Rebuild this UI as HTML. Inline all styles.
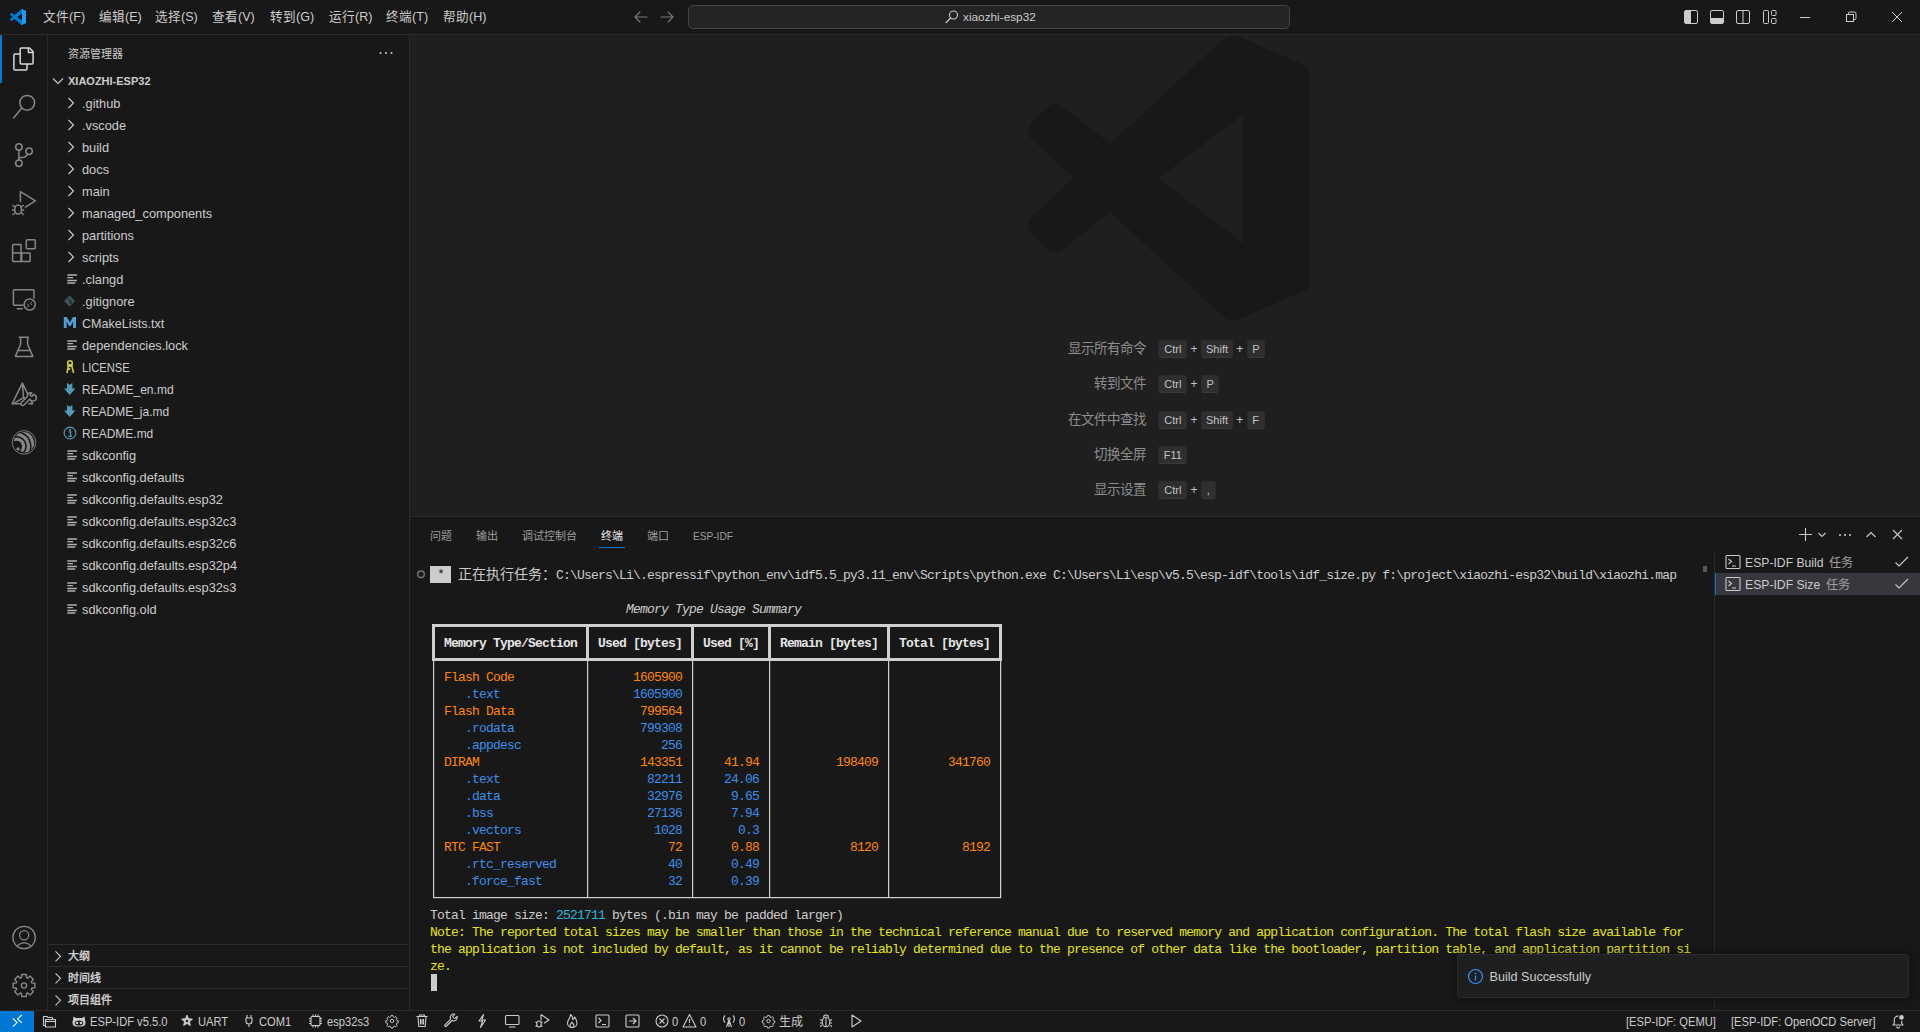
<!DOCTYPE html>
<html lang="zh-CN">
<head>
<meta charset="utf-8">
<style>
*{box-sizing:border-box;margin:0;padding:0}
html,body{width:1920px;height:1032px;overflow:hidden;background:#181818;font-family:"Liberation Sans",sans-serif;color:#cccccc}
.a{position:absolute}
svg{display:block;overflow:visible}
.t{position:absolute;white-space:nowrap;line-height:1}
/* regions */
#title{left:0;top:0;width:1920px;height:35px;background:#181818;border-bottom:1px solid #2b2b2b}
#act{left:0;top:35px;width:48px;height:975px;background:#181818;border-right:1px solid #2b2b2b}
#side{left:48px;top:35px;width:362px;height:975px;background:#181818;border-right:1px solid #2b2b2b}
#editor{left:410px;top:35px;width:1510px;height:481px;background:#1f1f1f}
#panel{left:410px;top:516px;width:1510px;height:494px;background:#181818;border-top:1px solid #2b2b2b}
#status{left:0;top:1010px;width:1920px;height:22px;background:#181818;border-top:1px solid #2b2b2b}
.menu{top:11px;font-size:12.6px;color:#cccccc}
.tree{font-size:12.8px;color:#cccccc;height:22px;line-height:22px}
.mono{font-family:"Liberation Mono",monospace}
</style>
</head>
<body>
<div id="title" class="a"></div>
<div id="act" class="a"></div>
<div id="side" class="a"></div>
<div id="editor" class="a"></div>
<div id="panel" class="a"></div>
<div id="status" class="a"></div>

<!-- TITLEBAR -->
<svg class="a" style="left:10px;top:9px" width="16" height="16" viewBox="0 0 100 100"><defs><clipPath id="lg"><path d="M96.5 10.8 75.9.9a6.2 6.2 0 0 0-7.1 1.2L29.4 38 12.2 25a4.2 4.2 0 0 0-5.3.2L1.4 30.3a4.2 4.2 0 0 0 0 6.2L16.3 50 1.4 63.5a4.2 4.2 0 0 0 0 6.2l5.5 5a4.2 4.2 0 0 0 5.3.2l17.2-13L68.8 97.9a6.2 6.2 0 0 0 7.1 1.2l20.6-9.9a6.2 6.2 0 0 0 3.5-5.6V16.4a6.2 6.2 0 0 0-3.5-5.6zM75 72.7 45.1 50 75 27.3z"/></clipPath></defs><g clip-path="url(#lg)"><rect x="0" y="0" width="100" height="100" fill="#0065a9"/><path d="M0 30L30 38L75 0H100V100H75L30 62L0 70Z" fill="#007acc"/><rect x="74" y="0" width="26" height="100" fill="#1f9cf0"/></g></svg>
<div class="t menu" style="left:43px">文件(F)</div>
<div class="t menu" style="left:99px">编辑(E)</div>
<div class="t menu" style="left:155px">选择(S)</div>
<div class="t menu" style="left:212px">查看(V)</div>
<div class="t menu" style="left:270px">转到(G)</div>
<div class="t menu" style="left:329px">运行(R)</div>
<div class="t menu" style="left:386px">终端(T)</div>
<div class="t menu" style="left:443px">帮助(H)</div>

<!-- title center -->
<svg class="a" style="left:0;top:0" width="1920" height="35">
 <g fill="none" stroke="#cccccc" stroke-width="1.1" stroke-linecap="round" stroke-linejoin="round" opacity="0.55">
  <path d="M647 17H635M640 12l-5 5 5 5"/>
  <path d="M661 17H673M668 12l5 5-5 5"/>
 </g>
 <rect x="688.5" y="5.5" width="601" height="23" rx="4.5" fill="#242424" stroke="#454545"/>
 <g fill="none" stroke="#cccccc" stroke-width="1.1">
  <circle cx="953.5" cy="15" r="4"/><path d="M950.6 18l-5 5"/>
 </g>
 <g fill="none" stroke="#cccccc" stroke-width="1">
  <rect x="1684.5" y="10.5" width="13" height="13" rx="1.5"/>
  <rect x="1710.5" y="10.5" width="13" height="13" rx="1.5"/>
  <rect x="1736.5" y="10.5" width="13" height="13" rx="1.5"/><path d="M1743 10.5v13"/>
  <rect x="1763.5" y="10.5" width="5" height="13" rx="1"/><rect x="1771.5" y="10.5" width="4.5" height="5" rx="1"/><rect x="1771.5" y="18.5" width="4.5" height="5" rx="1"/>
 </g>
 <rect x="1685" y="11" width="6" height="12" fill="#cccccc"/>
 <rect x="1711" y="18" width="12" height="5" fill="#cccccc"/>
 <g fill="none" stroke="#cccccc" stroke-width="1">
  <path d="M1800 17.5h10"/>
  <rect x="1846.5" y="14.5" width="7" height="7"/><path d="M1848.5 14.5v-1.5a1 1 0 0 1 1-1h5a1.5 1.5 0 0 1 1.5 1.5v5a1 1 0 0 1-1 1h-1.5"/>
  <path d="M1892 12l10 10M1902 12l-10 10"/>
 </g>
</svg>
<div class="t" style="left:963px;top:12px;font-size:11.8px;color:#cccccc">xiaozhi-esp32</div>

<!-- ACTIVITY BAR -->
<div class="a" style="left:0;top:35px;width:2px;height:48px;background:#0078d4"></div>
<svg class="a" style="left:0;top:0" width="48" height="1010">
 <g fill="none" stroke="#d7d7d7" stroke-width="1.5" stroke-linejoin="round">
  <path d="M20.2 54V49a1 1 0 0 1 1-1h8.3l3.6 3.6V63a1 1 0 0 1-1 1H21.2a1 1 0 0 1-1-1Z"/>
  <path d="M28.4 48v4.5h4.6"/>
  <path d="M20.2 54H14.9a1 1 0 0 0-1 1v14a1 1 0 0 0 1 1H26a1 1 0 0 0 1-1v-5"/>
 </g>
 <g fill="none" stroke="#868686" stroke-width="1.5" stroke-linecap="round" stroke-linejoin="round">
  <circle cx="27.2" cy="102.8" r="7.4"/><path d="M21.8 108l-8.2 10"/>
  <circle cx="18.9" cy="147" r="3.2"/><circle cx="18.9" cy="163.3" r="3.2"/><circle cx="29.1" cy="151.2" r="3.2"/>
  <path d="M18.9 150.2v9.9M27.5 154c-1 2.5-2.5 3.6-5.5 3.6h-3"/>
  <path d="M20.4 201.5V191.6l15 9.3-10 6.3"/>
  <ellipse cx="18.1" cy="209.5" rx="3.4" ry="4.6"/><path d="M13 205.5l2 1.5M23.2 205.5l-2 1.5M12.5 210h2.2M21.5 210h2.2M13 214.5l2-1.5M23.2 214.5l-2-1.5"/>
  <path d="M13.4 244.5h7.6v17H13.4a.8.8 0 0 1-.8-.8V245.3a.8.8 0 0 1 .8-.8Z"/><path d="M12.6 253h17.5v7.7a.8.8 0 0 1-.8.8H21M21.7 253v8.5"/>
  <rect x="26.3" y="239.8" width="9" height="9" rx="1"/>
 </g>
 <g fill="none" stroke="#868686" stroke-width="1.5" stroke-linecap="round" stroke-linejoin="round">
  <path d="M23 305.3H14.2a.8.8 0 0 1-.8-.8V290.6a.8.8 0 0 1 .8-.8h19a.8.8 0 0 1 .8.8V298"/><path d="M17.3 308.7h5"/>
  <circle cx="29.7" cy="304.5" r="5.6"/><path d="M27.3 304l1.6 1.6-1.6 1.6M32 301.7l-1.6 1.6 1.6 1.6" stroke-width="1"/>
  <path d="M19.2 337.2h9.3M20.6 337.2v7L15.4 356.4h17.4l-5.2-12.2v-7M17.5 350.6h13"/>
  <path d="M22.4 383.2L12.1 403.8h11M29 403.8h3.7L22.4 383.2l1.2 14.5-8.5 5"/><path d="M23.6 397.7l4.5 2"/>
  <path d="M24 405l6-6a3.3 3.3 0 1 0 3.5-4.5l-1.5 1.8-1.4-.4-.4-1.4 1.6-1.6a3.3 3.3 0 0 0-4.4 3.6l-6 6a1.2 1.2 0 1 0 2.6 2.5Z" fill="#181818"/>
 </g>
 <defs><clipPath id="espc"><circle cx="24" cy="442.4" r="10.4"/></clipPath></defs>
 <g>
  <circle cx="24" cy="442.4" r="11.8" fill="none" stroke="#868686" stroke-width="0.9"/>
  <g clip-path="url(#espc)" fill="none" stroke="#868686" stroke-width="3.2"><path d="M9.20 446.30A7.2 7.2 0 1 1 21.49 451.39"/><path d="M4.40 446.30A12 12 0 1 1 24.89 454.79"/><path d="M-0.30 446.30A16.7 16.7 0 1 1 28.21 458.11"/></g>
  <circle cx="18.1" cy="448.9" r="1.7" fill="#868686"/>
 </g>
 <g fill="none" stroke="#868686" stroke-width="1.3">
  <circle cx="24.1" cy="937.5" r="11.2"/><circle cx="24.1" cy="935.3" r="4.6"/>
  <path d="M17.3 946.3a8.5 8.5 0 0 1 13.6 0"/>
 </g>
 <path fill="none" stroke="#868686" stroke-width="1.4" stroke-linejoin="round" d="M21.46 977.70 L21.67 974.55 L26.33 974.55 L26.54 977.70 L27.72 978.19 L30.09 976.10 L33.40 979.41 L31.31 981.78 L31.80 982.96 L34.95 983.17 L34.95 987.83 L31.80 988.04 L31.31 989.22 L33.40 991.59 L30.09 994.90 L27.72 992.81 L26.54 993.30 L26.33 996.45 L21.67 996.45 L21.46 993.30 L20.28 992.81 L17.91 994.90 L14.60 991.59 L16.69 989.22 L16.20 988.04 L13.05 987.83 L13.05 983.17 L16.20 982.96 L16.69 981.78 L14.60 979.41 L17.91 976.10 L20.28 978.19Z"/>
 <circle cx="24" cy="985.5" r="2.6" fill="none" stroke="#868686" stroke-width="1.4"/>
</svg>

<!-- SIDEBAR -->
<div class="t" style="left:68px;top:48.5px;font-size:11px;color:#cccccc">资源管理器</div>
<svg class="a" style="left:0;top:0" width="410" height="1010">
 <g fill="#cccccc"><circle cx="380.5" cy="53" r="1"/><circle cx="386" cy="53" r="1"/><circle cx="391.5" cy="53" r="1"/></g>
 <path d="M53 78.5l5 5 5-5" fill="none" stroke="#cccccc" stroke-width="1.1"/>
 <path d="M68.5 98l5 5-5 5" fill="none" stroke="#cccccc" stroke-width="1.1"/>
 <path d="M68.5 120l5 5-5 5" fill="none" stroke="#cccccc" stroke-width="1.1"/>
 <path d="M68.5 142l5 5-5 5" fill="none" stroke="#cccccc" stroke-width="1.1"/>
 <path d="M68.5 164l5 5-5 5" fill="none" stroke="#cccccc" stroke-width="1.1"/>
 <path d="M68.5 186l5 5-5 5" fill="none" stroke="#cccccc" stroke-width="1.1"/>
 <path d="M68.5 208l5 5-5 5" fill="none" stroke="#cccccc" stroke-width="1.1"/>
 <path d="M68.5 230l5 5-5 5" fill="none" stroke="#cccccc" stroke-width="1.1"/>
 <path d="M68.5 252l5 5-5 5" fill="none" stroke="#cccccc" stroke-width="1.1"/>
 <path d="M67.3 275h9.6M67.3 277.6h5.7M67.3 280.5h9.6M67.3 283h8" stroke="#cccccc" stroke-width="1.3" opacity="0.85"/>
 <path d="M69.6 295.5l5.5 5.5-5.5 5.5-5.5-5.5Z" fill="#41535b"/><path d="M68 298l1.8 1.8v4M69.8 299.8l1.6 1.6v2.6" stroke="#181818" stroke-width="0.8" fill="none"/>
 <path d="M63.8 328V317h3l3.1 5.5 3.1-5.5h3V328h-2.9v-6.2l-2.4 4.2h-1.6l-2.4-4.2V328Z" fill="#4f9fd0"/>
 <path d="M67.3 341h9.6M67.3 343.6h5.7M67.3 346.5h9.6M67.3 349h8" stroke="#cccccc" stroke-width="1.3" opacity="0.85"/>
 <g fill="none" stroke="#cbcb41" stroke-width="1.6"><circle cx="70" cy="363" r="2.3"/><path d="M68.5 365L67 373M71.5 365l2.2 8M69.3 368v2"/></g><rect x="67.5" y="364" width="5" height="3" fill="#cbcb41"/>
 <path d="M67 383l2.7 1.8 2.7-1.8v5.5h3L69.7 395l-5.6-6.5h2.9Z" fill="#519aba"/>
 <path d="M67 405l2.7 1.8 2.7-1.8v5.5h3L69.7 417l-5.6-6.5h2.9Z" fill="#519aba"/>
 <circle cx="70" cy="433" r="5.9" fill="none" stroke="#519aba" stroke-width="1.1"/><circle cx="70" cy="429.8" r="1" fill="#519aba"/><path d="M68.6 431.8h2v4.3M68.3 436.3h3.6" stroke="#519aba" stroke-width="1.3" fill="none"/>
 <path d="M67.3 451h9.6M67.3 453.6h5.7M67.3 456.5h9.6M67.3 459h8" stroke="#cccccc" stroke-width="1.3" opacity="0.85"/>
 <path d="M67.3 473h9.6M67.3 475.6h5.7M67.3 478.5h9.6M67.3 481h8" stroke="#cccccc" stroke-width="1.3" opacity="0.85"/>
 <path d="M67.3 495h9.6M67.3 497.6h5.7M67.3 500.5h9.6M67.3 503h8" stroke="#cccccc" stroke-width="1.3" opacity="0.85"/>
 <path d="M67.3 517h9.6M67.3 519.6h5.7M67.3 522.5h9.6M67.3 525h8" stroke="#cccccc" stroke-width="1.3" opacity="0.85"/>
 <path d="M67.3 539h9.6M67.3 541.6h5.7M67.3 544.5h9.6M67.3 547h8" stroke="#cccccc" stroke-width="1.3" opacity="0.85"/>
 <path d="M67.3 561h9.6M67.3 563.6h5.7M67.3 566.5h9.6M67.3 569h8" stroke="#cccccc" stroke-width="1.3" opacity="0.85"/>
 <path d="M67.3 583h9.6M67.3 585.6h5.7M67.3 588.5h9.6M67.3 591h8" stroke="#cccccc" stroke-width="1.3" opacity="0.85"/>
 <path d="M67.3 605h9.6M67.3 607.6h5.7M67.3 610.5h9.6M67.3 613h8" stroke="#cccccc" stroke-width="1.3" opacity="0.85"/>
 <path d="M48 944.5h361M48 966.5h361M48 988.5h361" stroke="#2b2b2b"/>
 <path d="M55.5 951.3l5 5-5 5M55.5 973.3l5 5-5 5M55.5 995.3l5 5-5 5" fill="none" stroke="#cccccc" stroke-width="1.1"/>
</svg>
<div class="t" style="left:68px;top:76px;font-size:11px;font-weight:bold;color:#cccccc">XIAOZHI-ESP32</div>
<div class="t tree" style="left:82px;top:93px">.github</div>
<div class="t tree" style="left:82px;top:115px">.vscode</div>
<div class="t tree" style="left:82px;top:137px">build</div>
<div class="t tree" style="left:82px;top:159px">docs</div>
<div class="t tree" style="left:82px;top:181px">main</div>
<div class="t tree" style="left:82px;top:203px">managed_components</div>
<div class="t tree" style="left:82px;top:225px">partitions</div>
<div class="t tree" style="left:82px;top:247px">scripts</div>
<div class="t tree" style="left:82px;top:269px">.clangd</div>
<div class="t tree" style="left:82px;top:291px">.gitignore</div>
<div class="t tree" style="left:82px;top:313px;transform:scaleX(0.98);transform-origin:0 0">CMakeLists.txt</div>
<div class="t tree" style="left:82px;top:335px">dependencies.lock</div>
<div class="t tree" style="left:82px;top:357px;transform:scaleX(0.87);transform-origin:0 0">LICENSE</div>
<div class="t tree" style="left:82px;top:379px;transform:scaleX(0.94);transform-origin:0 0">README_en.md</div>
<div class="t tree" style="left:82px;top:401px;transform:scaleX(0.935);transform-origin:0 0">README_ja.md</div>
<div class="t tree" style="left:82px;top:423px;transform:scaleX(0.937);transform-origin:0 0">README.md</div>
<div class="t tree" style="left:82px;top:445px">sdkconfig</div>
<div class="t tree" style="left:82px;top:467px">sdkconfig.defaults</div>
<div class="t tree" style="left:82px;top:489px">sdkconfig.defaults.esp32</div>
<div class="t tree" style="left:82px;top:511px">sdkconfig.defaults.esp32c3</div>
<div class="t tree" style="left:82px;top:533px">sdkconfig.defaults.esp32c6</div>
<div class="t tree" style="left:82px;top:555px">sdkconfig.defaults.esp32p4</div>
<div class="t tree" style="left:82px;top:577px">sdkconfig.defaults.esp32s3</div>
<div class="t tree" style="left:82px;top:599px">sdkconfig.old</div>
<div class="t" style="left:68px;top:951px;font-size:11px;font-weight:bold;color:#cccccc">大纲</div>
<div class="t" style="left:68px;top:973px;font-size:11px;font-weight:bold;color:#cccccc">时间线</div>
<div class="t" style="left:68px;top:995px;font-size:11px;font-weight:bold;color:#cccccc">项目组件</div>

<!-- EDITOR WATERMARK -->
<svg class="a" style="left:1028px;top:35px" width="281" height="286" viewBox="0 0 100 100" preserveAspectRatio="none">
 <path fill="#181818" fill-rule="evenodd" d="M70.9119 99.3171C72.4869 99.9307 74.2828 99.8914 75.8725 99.1264L100 88.6V11.4L75.8725 0.873756C73.7862 -0.130129 71.3446 0.11576 69.5135 1.44695C69.252 1.63711 69.0028 1.84943 68.769 2.08341L29.3551 38.0415L12.1872 25.0096C10.589 23.7965 8.35363 23.8959 6.86933 25.2461L1.36303 30.2549C-0.452552 31.9064 -0.454633 34.7627 1.35853 36.417L16.2471 50.0001L1.35853 63.5832C-0.454633 65.2374 -0.452552 68.0938 1.36303 69.7453L6.86933 74.7541C8.35363 76.1043 10.589 76.2037 12.1872 74.9905L29.3551 61.9587L68.769 97.9167C69.3925 98.5406 70.1246 99.0104 70.9119 99.3171ZM76.6 27.7L46.4 50.2L76.6 72.8Z"/>
</svg>
<style>
.sl{position:absolute;right:774px;white-space:nowrap;font-size:13.5px;line-height:1;color:#8e8e8e}
.kb{position:absolute;height:18px;background:#2f2f2f;border:1px solid #2c2c2c;border-bottom-color:#3a3a3a;border-radius:3px;font-size:11px;line-height:16px;text-align:center;color:#c3c3c3}
.kp{position:absolute;font-size:12px;line-height:1;color:#c3c3c3}
</style>
<div class="sl" style="top:342px">显示所有命令</div>
<div class="kb" style="left:1158.4px;top:340px;width:29px">Ctrl</div>
<div class="kp" style="left:1190.4px;top:343px">+</div>
<div class="kb" style="left:1200.8000000000002px;top:340px;width:32.5px">Shift</div>
<div class="kp" style="left:1236.3000000000002px;top:343px">+</div>
<div class="kb" style="left:1246.7000000000003px;top:340px;width:18.5px">P</div>
<div class="sl" style="top:377px">转到文件</div>
<div class="kb" style="left:1158.4px;top:375px;width:29px">Ctrl</div>
<div class="kp" style="left:1190.4px;top:378px">+</div>
<div class="kb" style="left:1200.8000000000002px;top:375px;width:18.5px">P</div>
<div class="sl" style="top:413px">在文件中查找</div>
<div class="kb" style="left:1158.4px;top:411px;width:29px">Ctrl</div>
<div class="kp" style="left:1190.4px;top:414px">+</div>
<div class="kb" style="left:1200.8000000000002px;top:411px;width:32.5px">Shift</div>
<div class="kp" style="left:1236.3000000000002px;top:414px">+</div>
<div class="kb" style="left:1246.7000000000003px;top:411px;width:18px">F</div>
<div class="sl" style="top:448px">切换全屏</div>
<div class="kb" style="left:1158.4px;top:446px;width:29px">F11</div>
<div class="sl" style="top:483px">显示设置</div>
<div class="kb" style="left:1158.4px;top:481px;width:29px">Ctrl</div>
<div class="kp" style="left:1190.4px;top:484px">+</div>
<div class="kb" style="left:1200.8000000000002px;top:481px;width:15px">,</div>

<!-- PANEL -->
<style>
.ptab{position:absolute;top:531px;font-size:11px;line-height:1;color:#9d9d9d;white-space:nowrap}
.tr{position:absolute;left:430px;height:17px;line-height:17px;margin-top:1px;font-family:"Liberation Mono",monospace;font-size:13px;letter-spacing:-0.8px;white-space:pre;color:#cccccc}
.o{color:#ff8700}.b{color:#3b8eea}.c{color:#29b8db}.y{color:#e5e510}
.hd{color:#e5e5e5;font-weight:bold}
</style>
<div class="ptab" style="left:430px">问题</div>
<div class="ptab" style="left:476px">输出</div>
<div class="ptab" style="left:522px">调试控制台</div>
<div class="ptab" style="left:600.5px;color:#e7e7e7">终端</div>
<div class="ptab" style="left:646.5px">端口</div>
<div class="ptab" style="left:693px;transform:scaleX(.92);transform-origin:0 0">ESP-IDF</div>
<div class="a" style="left:599px;top:547px;width:26px;height:1px;background:#0078d4"></div>
<svg class="a" style="left:0;top:0" width="1920" height="1010">
 <g fill="none" stroke="#cccccc" stroke-width="1.1">
  <path d="M1805.5 528v13M1799 534.5h13"/>
  <path d="M1818.5 533l3.5 3.5 3.5-3.5"/>
  <path d="M1866.5 537l4.5-4.5 4.5 4.5"/>
  <path d="M1893 530l9 9M1902 530l-9 9"/>
 </g>
 <g fill="#cccccc"><circle cx="1840" cy="535" r="1"/><circle cx="1845" cy="535" r="1"/><circle cx="1850" cy="535" r="1"/></g>
 <path d="M1714.5 551v459" stroke="#2b2b2b"/>
 <rect x="1715" y="573" width="205" height="22" fill="#37373d"/>
 <rect x="1715" y="573" width="1" height="22" fill="#0078d4"/>
 <g fill="none" stroke="#cccccc" stroke-width="1.1">
  <rect x="1726" y="555.5" width="14" height="13" rx="1"/><path d="M1728.5 559l3 2.5-3 2.5M1732 566h4"/>
  <rect x="1726" y="577.5" width="14" height="13" rx="1"/><path d="M1728.5 581l3 2.5-3 2.5M1732 588h4"/>
  <path d="M1895.5 562.5l3.5 3.5 9-9M1895.5 584.5l3.5 3.5 9-9"/>
 </g>
 <rect x="1703" y="566" width="4" height="6" fill="#5a5a5a"/>
 <circle cx="421" cy="574.3" r="3.3" fill="none" stroke="#6f6f6f" stroke-width="1.6"/>
</svg>
<div class="t" style="left:1745px;top:557px;font-size:12.2px;color:#cccccc">ESP-IDF Build <span style="color:#a0a0a0;margin-left:2px">任务</span></div>
<div class="t" style="left:1745px;top:579px;font-size:12.2px;color:#cccccc">ESP-IDF Size <span style="color:#a0a0a0;margin-left:2px">任务</span></div>

<!-- TERMINAL -->
<div class="a" style="left:430px;top:566px;width:21px;height:17px;background:#cccccc"></div>
<div class="tr" style="top:566px;color:#181818;margin-top:0">&nbsp;*</div>
<div class="tr" style="top:566px;left:458px;margin-top:0"><span style="font-family:'Liberation Sans',sans-serif;letter-spacing:0;font-size:14px;display:inline-block;width:98px">正在执行任务：</span>C:\Users\Li\.espressif\python_env\idf5.5_py3.11_env\Scripts\python.exe C:\Users\Li\esp\v5.5\esp-idf\tools\idf_size.py f:\project\xiaozhi-esp32\build\xiaozhi.map</div>
<div class="tr" style="top:600px;left:626px;font-style:italic">Memory Type Usage Summary</div>
<div class="tr hd" style="top:634px">  Memory Type/Section   Used [bytes]   Used [%]   Remain [bytes]   Total [bytes]</div>
<div class="tr o" style="top:668px">  Flash Code                 1605900</div>
<div class="tr b" style="top:685px">     .text                   1605900</div>
<div class="tr o" style="top:702px">  Flash Data                  799564</div>
<div class="tr b" style="top:719px">     .rodata                  799308</div>
<div class="tr b" style="top:736px">     .appdesc                    256</div>
<div class="tr o" style="top:753px">  DIRAM                       143351      41.94           198409          341760</div>
<div class="tr b" style="top:770px">     .text                     82211      24.06</div>
<div class="tr b" style="top:787px">     .data                     32976       9.65</div>
<div class="tr b" style="top:804px">     .bss                      27136       7.94</div>
<div class="tr b" style="top:821px">     .vectors                   1028        0.3</div>
<div class="tr o" style="top:838px">  RTC FAST                        72       0.88             8120            8192</div>
<div class="tr b" style="top:855px">     .rtc_reserved                40       0.49</div>
<div class="tr b" style="top:872px">     .force_fast                  32       0.39</div>
<div class="tr" style="top:906px">Total image size: <span class="c">2521711</span> bytes (.bin may be padded larger)</div>
<div class="tr y" style="top:923px">Note: The reported total sizes may be smaller than those in the technical reference manual due to reserved memory and application configuration. The total flash size available for</div>
<div class="tr y" style="top:940px">the application is not included by default, as it cannot be reliably determined due to the presence of other data like the bootloader, partition table, and application partition si</div>
<div class="tr y" style="top:957px">ze.</div>
<div class="a" style="left:431px;top:974px;width:6px;height:17px;background:#cccccc"></div>
<svg class="a" style="left:0;top:0" width="1920" height="1010"><rect x="432.0" y="624.0" width="570.0" height="3" fill="#d0d0d0"/><rect x="432.0" y="658.0" width="570.0" height="3" fill="#d0d0d0"/><rect x="432.0" y="624.0" width="3" height="37.0" fill="#d0d0d0"/><rect x="433.0" y="659.5" width="1.2" height="238.0" fill="#d0d0d0"/><rect x="586.0" y="624.0" width="3" height="37.0" fill="#d0d0d0"/><rect x="587.0" y="659.5" width="1.2" height="238.0" fill="#d0d0d0"/><rect x="691.0" y="624.0" width="3" height="37.0" fill="#d0d0d0"/><rect x="692.0" y="659.5" width="1.2" height="238.0" fill="#d0d0d0"/><rect x="768.0" y="624.0" width="3" height="37.0" fill="#d0d0d0"/><rect x="769.0" y="659.5" width="1.2" height="238.0" fill="#d0d0d0"/><rect x="887.0" y="624.0" width="3" height="37.0" fill="#d0d0d0"/><rect x="888.0" y="659.5" width="1.2" height="238.0" fill="#d0d0d0"/><rect x="999.0" y="624.0" width="3" height="37.0" fill="#d0d0d0"/><rect x="1000.0" y="659.5" width="1.2" height="238.0" fill="#d0d0d0"/><rect x="433.0" y="897.0" width="568.2" height="1.2" fill="#d0d0d0"/></svg>

<!-- STATUS BAR -->
<style>
.st{position:absolute;top:1016px;font-size:12px;transform:scaleX(.93);transform-origin:0 0;line-height:1;color:#cccccc;white-space:nowrap}
</style>
<div class="a" style="left:0;top:1011px;width:34px;height:21px;background:#0078d4"></div>
<svg class="a" style="left:0;top:1010px" width="1920" height="22">
 <g fill="none" stroke="#ffffff" stroke-width="1.1"><path d="M12.8 8.3l4.3 4.3-4.3 4.1M21.8 5l-4.2 3.9 4.2 3.9"/></g>
 <g fill="none" stroke="#cccccc" stroke-width="1.1" stroke-linejoin="round">
  <!-- folder/browse -->
  <path d="M45.5 15.5h-2v-9h3.5l1 1h4.5v1.5"/><path d="M45.5 9.5h10v7.5h-10Z"/><path d="M45.5 11.5h10"/>
  <!-- robot -->
  </g><path fill="#cccccc" d="M73.5 6.5l2.5 1.5h6l2.5-1.5 .5 3.5a5 5 0 0 1 .5 2.5 4 4 0 0 1-4 4h-5a4 4 0 0 1-4-4 5 5 0 0 1 .5-2.5Z"/><ellipse cx="79" cy="13" rx="4.3" ry="2.6" fill="#181818"/><circle cx="77" cy="13" r="1.3" fill="#cccccc"/><circle cx="81" cy="13" r="1.3" fill="#cccccc"/><g fill="none" stroke="#cccccc" stroke-width="1.1" stroke-linejoin="round">
  <!-- star -->
  <path d="M187 5l1.6 3.7 3.9.4-3 2.6.9 3.9-3.4-2.1-3.4 2.1.9-3.9-3-2.6 3.9-.4Z" fill="#cccccc" stroke-width="0.8"/><circle cx="187" cy="11" r="1.2" fill="#181818" stroke="none"/>
  <!-- plug -->
  <path d="M247 5v3M251 5v3M246 8h6v3a3 3 0 0 1-6 0ZM249 14v3"/>
  <!-- chip -->
  <rect x="311" y="6.5" width="9" height="9" rx="1"/><path d="M313 4.5v2M315.5 4.5v2M318 4.5v2M313 15.5v2M315.5 15.5v2M318 15.5v2M309 8.5h2M309 11h2M309 13.5h2M320 8.5h2M320 11h2M320 13.5h2"/>
  <!-- trash -->
  <path d="M416.5 6.5h11M419.5 6.5V5h5v1.5M418 6.5l.8 10h6.4l.8-10M420.5 9v5.5M422 9v5.5M423.5 9v5.5"/>
  <!-- wrench -->
  <path d="M446 16.5l6-6a3.5 3.5 0 0 0 5-4.2l-2 2-1.8-.3-.3-1.8 2-2a3.5 3.5 0 0 0-4.2 5l-6 6a1.2 1.2 0 0 0 1.3 1.3Z"/>
  <!-- flash -->
  <path d="M483.5 4.5l-4.5 6.5h3.5l-2 6.5 5-7.5h-3.5l1.5-5.5Z"/>
  <!-- monitor -->
  <rect x="505.5" y="5.5" width="13.5" height="9" rx="1"/><path d="M509 17h6.5"/>
  <!-- debug -->
  <path d="M541 4.5v6M541 4.5l8 5.5-5 3.3"/><ellipse cx="539" cy="14" rx="2.3" ry="3"/><path d="M535.5 12l1.5.8M542.5 12l-1.5.8M535.5 16.5l1.5-.8M542.5 16.5l-1.5-.8"/>
  <!-- flame -->
  <path d="M572 17.5a4.5 4.5 0 0 1-4.5-4.5c0-3 3-4.5 3-8.5 2 1.5 2.5 3 2 5 1-.5 2-1.5 2-2.5 1.5 1.5 2.5 3.5 2.5 6a4.5 4.5 0 0 1-4.5 4.5Z"/><path d="M572 17.5a2 2 0 0 1-2-2c0-1.2 1.3-2 2-3.5.7 1.5 2 2.3 2 3.5a2 2 0 0 1-2 2Z"/>
  <!-- terminal -->
  <rect x="596" y="5" width="13" height="12" rx="1"/><path d="M598.5 8l2.5 2.5-2.5 2.5M602 14.5h4"/>
  <!-- arrow box -->
  <rect x="626" y="5" width="13" height="12" rx="1"/><path d="M629 11h6.5M633 8l3 3-3 3"/>
  <!-- error -->
  <circle cx="662" cy="11" r="6"/><path d="M659.5 8.5l5 5M664.5 8.5l-5 5"/>
  <!-- warning -->
  <path d="M689.5 4.5l6.5 12.5h-13Z"/><path d="M689.5 9v4M689.5 14.5v1"/>
  <!-- antenna -->
  <circle cx="729" cy="9" r="1.2"/><path d="M729 10v7M726.5 17l2.5-7 2.5 7M725 5.5a5 5 0 0 0 0 7M733 5.5a5 5 0 0 1 0 7"/>
  <!-- gear -->
  <g transform="translate(768.5 11) scale(.85) translate(-768.5 -11)"><circle cx="768.5" cy="11" r="2"/><path d="M767.4 4.5h2.2l.4 1.7 1.4.6 1.5-.9 1.6 1.6-.9 1.5.6 1.4 1.7.4v2.2l-1.7.4-.6 1.4.9 1.5-1.6 1.6-1.5-.9-1.4.6-.4 1.7h-2.2l-.4-1.7-1.4-.6-1.5.9-1.6-1.6.9-1.5-.6-1.4-1.7-.4v-2.2l1.7-.4.6-1.4-.9-1.5 1.6-1.6 1.5.9 1.4-.6Z"/></g>
  <g transform="translate(392 11) scale(.85) translate(-392 -11)"><circle cx="392" cy="11" r="2"/><path d="M390.9 4.5h2.2l.4 1.7 1.4.6 1.5-.9 1.6 1.6-.9 1.5.6 1.4 1.7.4v2.2l-1.7.4-.6 1.4.9 1.5-1.6 1.6-1.5-.9-1.4.6-.4 1.7h-2.2l-.4-1.7-1.4-.6-1.5.9-1.6-1.6.9-1.5-.6-1.4-1.7-.4v-2.2l1.7-.4.6-1.4-.9-1.5 1.6-1.6 1.5.9 1.4-.6Z"/></g>
  <!-- bug -->
  <ellipse cx="826" cy="12" rx="3.8" ry="4.8"/><path d="M823.5 7.5a2.5 2.5 0 0 1 5 0M820 9.5l2 1M832 9.5l-2 1M820 13h2M830 13h2M820 16.5l2-1M832 16.5l-2-1M826 8v8.5"/>
  <!-- play -->
  <path d="M852 5l9 6-9 6Z"/>
  <!-- bell -->
  <path d="M1896.6 16.6a1.5 1.5 0 0 0 3 0M1893 15h10l-1.3-1.8v-3.4a3.7 3.7 0 0 0-7.4 0v3.4Z"/>
 </g>
 <circle cx="1901.5" cy="7.4" r="3.3" fill="#181818"/><circle cx="1901.5" cy="7.4" r="2.3" fill="#cccccc"/>
</svg>
<div class="st" style="left:89.5px">ESP-IDF v5.5.0</div>
<div class="st" style="left:198px">UART</div>
<div class="st" style="left:259px">COM1</div>
<div class="st" style="left:326.5px">esp32s3</div>
<div class="st" style="left:672px">0</div>
<div class="st" style="left:699.5px">0</div>
<div class="st" style="left:739px">0</div>
<div class="st" style="left:778.5px;transform:none;top:1016px">生成</div>
<div class="st" style="left:1625.5px">[ESP-IDF: QEMU]</div>
<div class="st" style="left:1730.5px">[ESP-IDF: OpenOCD Server]</div>

<!-- NOTIFICATION -->
<div class="a" style="left:1457px;top:954px;width:452px;height:44px;background:#1f1f1f;border:1px solid #2b2b2b;border-radius:4px;box-shadow:0 0 8px 2px rgba(0,0,0,0.36)"></div>
<svg class="a" style="left:1467px;top:968px" width="18" height="18"><circle cx="8.5" cy="8.5" r="7" fill="none" stroke="#3794ff" stroke-width="1.2"/><circle cx="8.5" cy="5.3" r="0.9" fill="#3794ff"/><path d="M8.5 7.5v5" stroke="#3794ff" stroke-width="1.3"/></svg>
<div class="t" style="left:1489.5px;top:971px;font-size:12.6px;color:#cccccc">Build Successfully</div>

</body>
</html>
